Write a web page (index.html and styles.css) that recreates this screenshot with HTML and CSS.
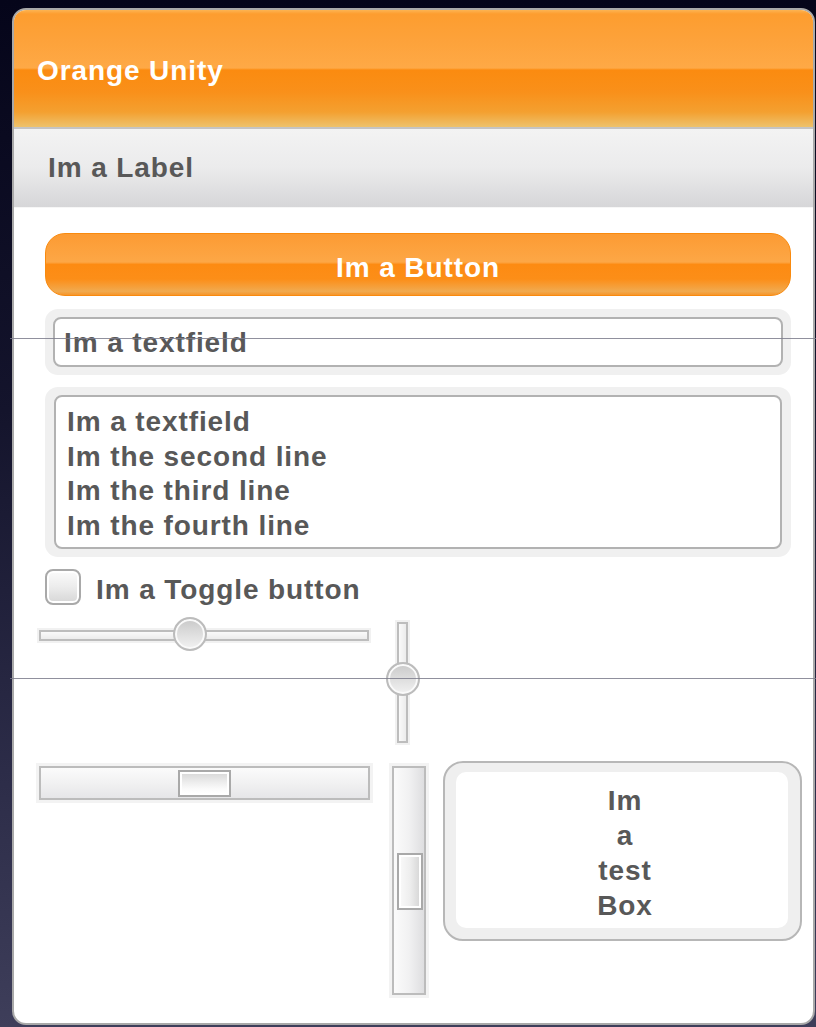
FILE: index.html
```html
<!DOCTYPE html>
<html lang="en">
<head>
<meta charset="utf-8">
<title>Orange Unity</title>
<link rel="stylesheet" href="styles.css">
</head>
<body>
<div class="panel">
  <header class="titlebar">Orange Unity</header>
  <div class="labelbar">Im a Label</div>
  <main class="content">
    <div class="btn">Im a Button</div>

    <div class="field-wrap">
      <div class="field">Im a textfield</div>
    </div>

    <div class="area-wrap">
      <div class="area">Im a textfield<br>Im the second line<br>Im the third line<br>Im the fourth line</div>
    </div>

    <div class="toggle">
      <span class="check"></span>
      <span class="toggle-text">Im a Toggle button</span>
    </div>

    <div class="controls">
      <div class="hslider">
        <div class="hslider-track"></div>
        <div class="knob" style="left: calc(45.8% - 17px);"></div>
      </div>
      <div class="vslider">
        <div class="vslider-track"></div>
        <div class="knob" style="top: calc(47.5% - 17px);"></div>
      </div>
      <div class="spacer"></div>

      <div class="hscroll">
        <div class="hscroll-thumb" style="left: 42%;"></div>
      </div>
      <div class="vscroll">
        <div class="vscroll-thumb" style="top: 37.7%;"></div>
      </div>
      <div class="box">
        <div class="box-inner">Im<br>a<br>test<br>Box</div>
      </div>
    </div>
  </main>
</div>
<div class="guide guide-a"></div>
<div class="guide guide-b"></div>
</body>
</html>
```

FILE: styles.css
```css
* {
  box-sizing: border-box;
}

html, body {
  margin: 0;
  padding: 0;
}

body {
  position: relative;
  width: 816px;
  height: 1027px;
  overflow: hidden;
  background: linear-gradient(to bottom, #05051a 0%, #14142c 40%, #2c2c48 75%, #3e3e5a 100%);
  font-family: "Liberation Sans", Arial, sans-serif;
  font-weight: bold;
  font-size: 28px;
  letter-spacing: 0.9px;
  color: #585858;
}

/* window */
.panel {
  margin: 8px 0 0 12px;
  width: 803px;
  height: 1017px;
  border: 2px solid #a9a9a9;
  border-radius: 14px;
  background: #fff;
  overflow: hidden;
  display: flex;
  flex-direction: column;
}

.titlebar {
  height: 119px;
  flex: none;
  display: flex;
  align-items: center;
  padding: 4px 0 0 23px;
  color: #fff;
  border-bottom: 2px solid #c4c4c4;
  background: linear-gradient(to bottom,
    #fdb452 0px, #fd9d2f 4px, #fda23a 30px, #fea946 58px,
    #fb8b10 60px, #f9901a 82px, #f4a030 102px, #edc26c 117px);
}

.labelbar {
  height: 79px;
  flex: none;
  display: flex;
  align-items: center;
  padding-left: 34px;
  border-bottom: 1px solid #f6f6f6;
  background: linear-gradient(to bottom, #f3f3f3 0%, #ebebec 50%, #d6d6d8 100%);
}

.content {
  flex: 1;
  display: flex;
  flex-direction: column;
  align-items: flex-start;
  padding-left: 24px;
}

/* button */
.btn {
  margin: 25px 0 0 7px;
  width: 746px;
  height: 63px;
  border: 1px solid #f98a0e;
  border-radius: 20px;
  color: #fff;
  display: flex;
  align-items: center;
  justify-content: center;
  padding-top: 7px;
  background: linear-gradient(to bottom,
    #fc9b33 0%, #fda746 46%, #fd8b12 50%, #fc8e18 74%, #f1aa4f 94%, #f6962a 100%);
}

/* text fields */
.field-wrap,
.area-wrap {
  margin: 13px 0 0 7px;
  width: 746px;
  padding: 8px;
  background: #f0f0f0;
  border-radius: 13px;
}

.field {
  height: 50px;
  border: 2px solid #b2b2b2;
  border-radius: 8px;
  background: #fff;
  display: flex;
  align-items: center;
  padding: 2px 0 0 9px;
}

.area-wrap {
  margin-top: 12px;
  padding: 8px 9px;
}

.area {
  height: 154px;
  border: 2px solid #b2b2b2;
  border-radius: 8px;
  background: #fff;
  padding: 8px 0 0 11px;
  line-height: 34.7px;
}

/* toggle */
.toggle {
  margin: 12px 0 0 7px;
  display: flex;
  align-items: center;
  gap: 15px;
  height: 36px;
}

.check {
  width: 36px;
  height: 36px;
  border: 2px solid #a9a9a9;
  border-radius: 8px;
  background: linear-gradient(to bottom, #fbfbfb 0%, #ececec 50%, #d6d6d6 100%);
  box-shadow: inset 0 0 0 2px #fff;
}

.toggle-text {
  padding-top: 6px;
}

/* sliders, scrollbars, box */
.controls {
  margin-top: 12px;
  display: grid;
  grid-template-columns: 352px 53px 357px;
  grid-template-rows: 144px auto;
}

.hslider {
  position: relative;
  width: 332px;
  height: 34px;
  display: flex;
  align-items: center;
  padding-top: 2px;
}

.hslider-track {
  margin-left: 1px;
  width: 330px;
  height: 11px;
  border: 2px solid #bdbdbd;
  background: linear-gradient(to bottom, #fafafa, #ececec);
  box-shadow: 0 0 0 2px #f1f1f1;
}

.knob {
  position: absolute;
  width: 34px;
  height: 34px;
  border-radius: 50%;
  border: 2px solid #bcbcbc;
  background: linear-gradient(to bottom, #c9c9c9 0%, #dedede 50%, #f2f2f2 100%);
  box-shadow: inset 0 0 0 2px #fafafa;
}

.hslider .knob {
  top: 0;
}

.vslider {
  position: relative;
  margin: 5px 0 0 -4px;
  width: 34px;
  height: 121px;
  display: flex;
  justify-content: center;
}

.vslider-track {
  width: 11px;
  height: 121px;
  margin-left: -2px;
  border: 2px solid #bdbdbd;
  background: linear-gradient(to right, #fafafa, #ececec);
  box-shadow: 0 0 0 2px #f1f1f1;
}

.vslider .knob {
  left: 0;
}

.hscroll {
  position: relative;
  margin: 5px 0 0 1px;
  width: 331px;
  height: 34px;
  border: 2px solid #bcbcbc;
  background: linear-gradient(to bottom, #fbfbfb 0%, #f1f1f2 50%, #e6e6e8 100%);
  box-shadow: 0 0 0 3px #f3f3f3;
}

.hscroll-thumb {
  position: absolute;
  top: 2px;
  width: 53px;
  height: 27px;
  border: 2px solid #a9a9a9;
  background: linear-gradient(to bottom, #d6d6d6 0%, #ededed 45%, #fbfbfb 75%, #fff 100%);
  box-shadow: inset 0 0 0 2px #fff;
}

.vscroll {
  position: relative;
  margin: 5px 0 0 2px;
  width: 34px;
  height: 229px;
  border: 2px solid #bcbcbc;
  background: linear-gradient(to right, #fbfbfb 0%, #f1f1f2 50%, #dedee0 100%);
  box-shadow: 0 0 0 3px #f3f3f3;
}

.vscroll-thumb {
  position: absolute;
  left: 3px;
  width: 26px;
  height: 57px;
  border: 2px solid #a9a9a9;
  background: linear-gradient(to right, #fafafa 0%, #eeeeee 50%, #d4d4d4 100%);
  box-shadow: inset 0 0 0 2px #fff;
}

.box {
  width: 359px;
  height: 180px;
  border: 2px solid #b7b7b7;
  border-radius: 20px;
  background: #efefef;
  padding: 9px 12px 11px 11px;
}

.box-inner {
  height: 100%;
  border-radius: 10px;
  background: #fff;
  display: flex;
  align-items: center;
  justify-content: center;
  text-align: center;
  line-height: 35px;
  padding: 6px 0 0 6px;
}

/* ruler lines drawn across the window */
.guide {
  position: absolute;
  left: 10px;
  right: 0;
  height: 1px;
  background: rgba(125, 125, 140, 0.85);
}

.guide-a {
  top: 338px;
}

.guide-b {
  top: 678px;
}
```
